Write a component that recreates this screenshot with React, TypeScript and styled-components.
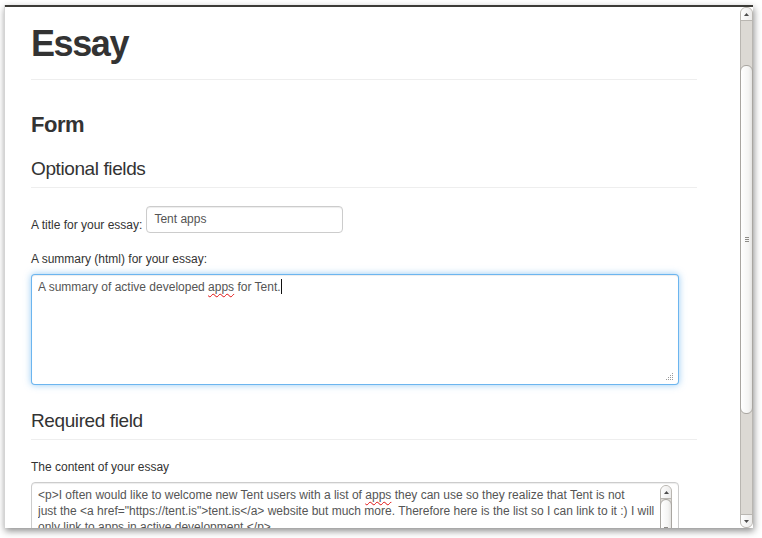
import React from 'react';
import styled, { createGlobalStyle } from 'styled-components';

const Global = createGlobalStyle`
  html, body { margin: 0; padding: 0; background: #fff; }
  body {
    width: 762px; height: 538px; overflow: hidden;
    font-family: "Liberation Sans", Arial, Helvetica, sans-serif;
    color: #333;
  }
`;

const Window = styled.div`
  margin: 5px 9px 0 4px;
  height: 523px;
  display: flex;
  flex-direction: column;
  background: #fff;
  border-left: 1px solid #d4d4d4;
  box-shadow: 1px 3px 7px rgba(0, 0, 0, 0.45);
  overflow: hidden;
`;

const TitleEdge = styled.div`
  flex: none;
  height: 2px;
  background: #3c3b37;
`;

const Body = styled.div`
  flex: 1;
  min-height: 0;
  display: flex;
`;

const Page = styled.div`
  flex: 1;
  min-width: 0;
  overflow: hidden;
  padding-left: 26px;
`;

const Container = styled.div`
  width: 666px;
  display: flex;
  flex-direction: column;
`;

const PageHeader = styled.h1`
  margin: 17px 0 0;
  padding-bottom: 15px;
  border-bottom: 1px solid #eee;
  font-size: 36px;
  line-height: 40px;
  font-weight: bold;
  letter-spacing: -1.4px;
  color: #333;
`;

const FormTitle = styled.h2`
  margin: 32px 0 0;
  font-size: 22px;
  line-height: 26px;
  font-weight: bold;
  letter-spacing: -0.5px;
  color: #333;
`;

const Section = styled.h3<{ $top: number; $pad: number }>`
  margin: ${p => p.$top}px 0 0;
  padding-bottom: ${p => p.$pad}px;
  border-bottom: 1px solid #eee;
  font-size: 19px;
  line-height: 24px;
  font-weight: normal;
  letter-spacing: -0.4px;
  color: #333;
`;

const InlineRow = styled.div`
  margin-top: 18px;
  display: flex;
  align-items: flex-end;
  gap: 4px;
`;

const Label = styled.label<{ $top?: number }>`
  display: block;
  margin-top: ${p => p.$top ?? 0}px;
  font-size: 12px;
  line-height: 16px;
  color: #333;
`;

const TextInput = styled.div`
  box-sizing: border-box;
  width: 197px;
  height: 27px;
  padding: 4px 7px;
  border: 1px solid #ccc;
  border-radius: 4px;
  box-shadow: inset 0 1px 1px rgba(0, 0, 0, 0.075);
  font-size: 12px;
  line-height: 16px;
  color: #555;
`;

const TextBox = styled.div<{ $focus?: boolean }>`
  position: relative;
  box-sizing: border-box;
  margin-top: 7px;
  width: 648px;
  height: 111px;
  padding: 4px 6px 0 6px;
  display: flex;
  gap: 2px;
  border: 1px solid ${p => (p.$focus ? 'rgba(82,168,236,0.85)' : '#ccc')};
  border-radius: 4px;
  box-shadow: ${p =>
    p.$focus
      ? 'inset 0 1px 1px rgba(0,0,0,.075), 0 0 7px rgba(82,168,236,.6)'
      : 'inset 0 1px 1px rgba(0,0,0,.075)'};
  font-size: 12px;
  line-height: 16px;
  color: #555;
  background: #fff;
`;

const Lines = styled.div`
  flex: 1;
  min-width: 0;
  overflow: hidden;
`;

const Line = styled.div`
  white-space: nowrap;
`;

const Misspelt = styled.span`
  text-decoration: underline wavy #e01010;
  text-decoration-thickness: 1px;
  text-underline-offset: 2px;
  text-decoration-skip-ink: none;
`;

const Caret = styled.span`
  display: inline-block;
  width: 0;
  height: 15px;
  border-left: 1px solid #111;
  vertical-align: -3px;
`;

const Grip = styled.svg`
  position: absolute;
  right: 4px;
  bottom: 3px;
`;

/* ---------- scrollbars ---------- */

const ScrollBar = styled.div<{ $w: number; $mt?: number }>`
  flex: none;
  width: ${p => p.$w}px;
  margin-top: ${p => p.$mt ?? 0}px;
  display: flex;
  flex-direction: column;
  box-sizing: border-box;
  background: #dcd9d4;
  border: 1px solid #b9b6b1;
  border-radius: 6px;
`;

const Stepper = styled.div<{ $dir: 'up' | 'down' }>`
  flex: none;
  height: 12px;
  display: flex;
  align-items: center;
  justify-content: center;
  background: linear-gradient(to right, #fdfdfd, #ecebea);
  border-radius: ${p => (p.$dir === 'up' ? '5px 5px 0 0' : '0 0 5px 5px')};
  border-${p => (p.$dir === 'up' ? 'bottom' : 'top')}: 1px solid #b9b6b1;
`;

const Trough = styled.div<{ $h?: number }>`
  flex: ${p => (p.$h === undefined ? '1' : `0 0 ${p.$h}px`)};
`;

const Thumb = styled.div<{ $h: number }>`
  flex: 0 0 ${p => p.$h}px;
  box-sizing: border-box;
  margin: 0 -1px;
  display: flex;
  align-items: center;
  justify-content: center;
  background: linear-gradient(to right, #ffffff, #f4f4f3 70%, #e4e3e1);
  border: 1px solid #a9a6a1;
  border-radius: 6px;
`;

const Arrow = ({ dir }: { dir: 'up' | 'down' }) => (
  <svg width="5" height="3" viewBox="0 0 5 3">
    <path d={dir === 'up' ? 'M0 3 L2.5 0 L5 3 Z' : 'M0 0 L2.5 3 L5 0 Z'} fill="#4c4c4c" />
  </svg>
);

const GripLines = () => (
  <svg width="4" height="5" viewBox="0 0 4 5">
    <path d="M0 0.5 H4 M0 2.5 H4 M0 4.5 H4" stroke="#8e8c88" strokeWidth="1" />
  </svg>
);

export default function App() {
  return (
    <>
      <Global />
      <Window>
        <TitleEdge />
        <Body>
          <Page>
            <Container>
              <PageHeader>Essay</PageHeader>
              <FormTitle>Form</FormTitle>
              <Section $top={19} $pad={6}>Optional fields</Section>
              <InlineRow>
                <Label>A title for your essay:</Label>
                <TextInput>Tent apps</TextInput>
              </InlineRow>
              <Label $top={18}>A summary (html) for your essay:</Label>
              <TextBox $focus role="textbox">
                <Lines>
                  <Line>
                    A summary of active developed <Misspelt>apps</Misspelt> for Tent.
                    <Caret />
                  </Line>
                </Lines>
                <Grip width="9" height="9" viewBox="0 0 9 9">
                  {[
                    [7, 1], [7, 3], [7, 5], [7, 7],
                    [5, 3], [5, 5], [5, 7],
                    [3, 5], [3, 7],
                    [1, 7],
                  ].map(([x, y], i) => (
                    <rect key={i} x={x} y={y} width="1" height="1" fill="#9a9a9a" />
                  ))}
                </Grip>
              </TextBox>
              <Section $top={24} $pad={6}>Required field</Section>
              <Label $top={19}>The content of your essay</Label>
              <TextBox role="textbox">
                <Lines>
                  <Line>
                    &lt;p&gt;I often would like to welcome new Tent users with a list of{' '}
                    <Misspelt>apps</Misspelt> they can use so they realize that Tent is not
                  </Line>
                  <Line>
                    just the &lt;a href="https://tent.is"&gt;tent.is&lt;/a&gt; website but much
                    more. Therefore here is the list so I can link to it :) I will
                  </Line>
                  <Line>only link to apps in active development.&lt;/p&gt;</Line>
                </Lines>
                <ScrollBar $w={12} $mt={-2}>
                  <Stepper $dir="up">
                    <Arrow dir="up" />
                  </Stepper>
                  <Thumb $h={60}>
                    <GripLines />
                  </Thumb>
                  <Trough />
                </ScrollBar>
              </TextBox>
            </Container>
          </Page>
          <ScrollBar $w={13}>
            <Stepper $dir="up">
              <Arrow dir="up" />
            </Stepper>
            <Trough $h={44} />
            <Thumb $h={349}>
              <GripLines />
            </Thumb>
            <Trough />
            <Stepper $dir="down">
              <Arrow dir="down" />
            </Stepper>
          </ScrollBar>
        </Body>
      </Window>
    </>
  );
}
